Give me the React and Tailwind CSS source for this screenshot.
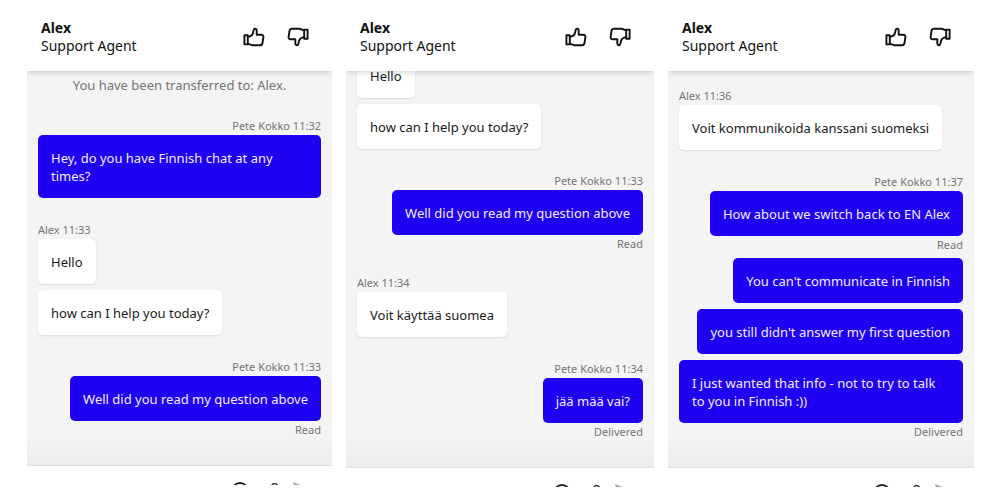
const panels = [
  {
    id: 'first',
    listClass: 'pt-[5px]',
    notice: 'You have been transferred to: Alex.',
    groups: [
      {
        from: 'customer',
        meta: 'Pete Kokko 11:32',
        messages: [{ text: 'Hey, do you have Finnish chat at any times?' }],
      },
      {
        from: 'agent',
        meta: 'Alex 11:33',
        messages: [{ text: 'Hello' }, { text: 'how can I help you today?' }],
      },
      {
        from: 'customer',
        meta: 'Pete Kokko 11:33',
        messages: [{ text: 'Well did you read my question above', status: 'Read' }],
      },
    ],
  },
  {
    id: 'second',
    // scrolled, so the first bubble slides under the header
    listClass: '-mt-[18px]',
    groups: [
      {
        from: 'agent',
        messages: [{ text: 'Hello' }, { text: 'how can I help you today?' }],
      },
      {
        from: 'customer',
        meta: 'Pete Kokko 11:33',
        messages: [{ text: 'Well did you read my question above', status: 'Read' }],
      },
      {
        from: 'agent',
        meta: 'Alex 11:34',
        messages: [{ text: 'Voit käyttää suomea' }],
      },
      {
        from: 'customer',
        meta: 'Pete Kokko 11:34',
        messages: [{ text: 'jää mää vai?', status: 'Delivered' }],
      },
    ],
  },
  {
    id: 'third',
    listClass: 'pt-[17px]',
    groups: [
      {
        from: 'agent',
        meta: 'Alex 11:36',
        messages: [{ text: 'Voit kommunikoida kanssani suomeksi' }],
      },
      {
        from: 'customer',
        meta: 'Pete Kokko 11:37',
        messages: [
          { text: 'How about we switch back to EN Alex', status: 'Read' },
          { text: "You can't communicate in Finnish" },
          { text: "you still didn't answer my first question" },
          {
            text: 'I just wanted that info - not to try to talk to you in Finnish :))',
            status: 'Delivered',
          },
        ],
      },
    ],
  },
];

const ThumbIcon = ({ down }) => (
  <svg
    viewBox="0 0 22 22"
    className={down ? 'size-[22px] rotate-180' : 'size-[22px]'}
    fill="none"
    stroke="currentColor"
    strokeWidth="1.9"
    strokeLinejoin="round"
    strokeLinecap="round"
    aria-hidden="true"
  >
    <path d="M1.400 9.200h3.400v9.200H1.400z" />
    <path d="M4.800 10.900c2.600-.4 4.600-1.600 5.100-3.700l.8-3.300c.4-1.700 3-1.500 3 .5v4.400h4.500c1.500 0 2.400 1 2.200 2.400l-.9 5.800c-.2 1.400-1.200 2.300-2.600 2.300H9.800c-1.800 0-2.800-1.400-5-1.400" />
  </svg>
);

const Header = () => (
  <header className="relative z-10 flex h-[71px] items-center justify-between bg-white pl-[14px] pr-[23px] pt-[2px] shadow-[0_1px_6px_rgba(0,0,0,0.2)]">
    <div className="text-[14px] leading-[18px] text-[#111]">
      <h2 className="font-bold">Alex</h2>
      <p>Support Agent</p>
    </div>
    <div className="flex gap-[22px] text-[#111]">
      <button type="button" aria-label="Thumbs up">
        <ThumbIcon />
      </button>
      <button type="button" aria-label="Thumbs down">
        <ThumbIcon down />
      </button>
    </div>
  </header>
);

const Group = ({ from, meta, messages }) => {
  const mine = from === 'customer';

  return (
    <li className={mine ? 'flex flex-col items-end' : 'flex flex-col items-start'}>
      {meta && (
        <p className="mb-px text-[11px] leading-[16px] text-[#757575]">{meta}</p>
      )}
      <div className={mine ? 'flex flex-col items-end gap-[6px]' : 'flex flex-col items-start gap-[6px]'}>
        {messages.map((message) => (
          <div key={message.text} className="flex flex-col items-end">
            <p
              className={
                mine
                  ? 'rounded-[5px] bg-[#2000f0] px-[13px] pt-[14px] pb-[13px] text-[13px] leading-[18px] text-[#f0eefe]'
                  : 'rounded-[5px] bg-white px-[13px] pt-[14px] pb-[13px] text-[13px] leading-[18px] text-[#1a1a1a] shadow-[0_1px_2px_rgba(0,0,0,0.1)]'
              }
            >
              {message.text}
            </p>
            {message.status && (
              <span className="mt-[2px] text-[11px] leading-[14px] text-[#757575]">
                {message.status}
              </span>
            )}
          </div>
        ))}
      </div>
    </li>
  );
};

// Only the top edge of the tools shows above the fold
const Toolbar = () => (
  <footer className="flex h-[19px] items-start justify-end gap-[15px] overflow-hidden bg-white pr-[25px] pt-[16px]">
    <button type="button" aria-label="Emoji">
      <svg viewBox="0 0 18 18" className="size-[18px]" fill="none" stroke="#222" strokeWidth="2" aria-hidden="true">
        <circle cx="9" cy="9" r="8" />
      </svg>
    </button>
    <button type="button" aria-label="Attach file">
      <svg viewBox="0 0 14 18" className="h-[18px] w-[14px]" fill="none" stroke="#333" strokeWidth="1.500" aria-hidden="true">
        <path d="M2 10l6-7c2-3 7-1 5 3L7 15" />
      </svg>
    </button>
    <button type="button" aria-label="Send">
      <svg viewBox="0 0 14 18" className="h-[18px] w-[14px]" fill="#aaa" aria-hidden="true">
        <path d="M0 0l14 5.500-14 6 1.500-5z" />
      </svg>
    </button>
  </footer>
);

const ChatPanel = ({ panel }) => (
  <section className="min-w-0 overflow-hidden">
    <Header />
    <div className="border-b border-[#dedede] bg-[#f4f4f4] bg-linear-to-t from-[#ececec] to-[#f4f4f4] to-[28px]">
      <ul className={`flex flex-col gap-[24px] px-[11px] pb-[28px] ${panel.listClass}`}>
        {panel.notice && (
          <li className="text-center text-[13px] leading-[18px] text-[#757575]">{panel.notice}</li>
        )}
        {panel.groups.map((group, index) => (
          <Group key={index} {...group} />
        ))}
      </ul>
    </div>
    <Toolbar />
  </section>
);

const App = () => (
  <main className="grid min-h-screen grid-cols-[305fr_308fr_306fr] items-start gap-[14px] bg-white pl-[27px] pr-[26px] font-['Noto_Sans',sans-serif]">
    {panels.map((panel) => (
      <ChatPanel key={panel.id} panel={panel} />
    ))}
  </main>
);

export default App;
